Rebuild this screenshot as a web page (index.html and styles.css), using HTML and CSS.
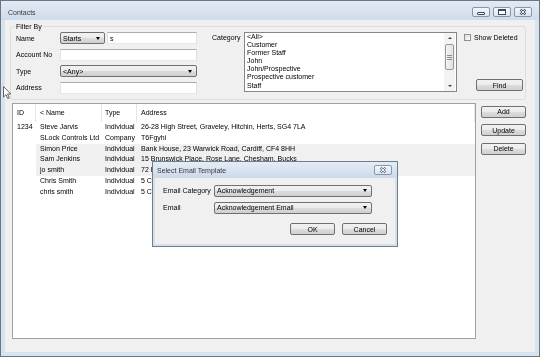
FILE: index.html
```html
<!DOCTYPE html>
<html lang="en">

<head>
  <meta charset="UTF-8" />
  <title>Contacts</title>
  <link rel="stylesheet" href="styles.css">
</head>

<body>
  <div class="window">
    <div class="titlebar">
      <span class="title">Contacts</span>
      <div class="caption-buttons">
        <span class="cap-btn">
          <svg width="16" height="8" viewBox="0 0 16 8"><rect x="4.5" y="4.5" width="7" height="2" rx="0.5" fill="#fff" stroke="#3d4b5e" stroke-width="1"/></svg>
        </span>
        <span class="cap-btn">
          <svg width="16" height="8" viewBox="0 0 16 8"><rect x="4.5" y="1.5" width="7" height="5" fill="#fff" stroke="#3d4b5e" stroke-width="1"/><rect x="5" y="2" width="6" height="1" fill="#3d4b5e"/></svg>
        </span>
        <span class="cap-btn">
          <svg width="16" height="8" viewBox="0 0 16 8"><path d="M5.5 1.5 L10.5 6.5 M10.5 1.5 L5.5 6.5" stroke="#3d4b5e" stroke-width="2.4"/><path d="M5.5 1.5 L10.5 6.5 M10.5 1.5 L5.5 6.5" stroke="#fff" stroke-width="0.9"/></svg>
        </span>
      </div>
    </div>

    <div class="client">
      <fieldset class="filter">
        <legend>Filter By</legend>
        <div class="fields">
          <label>Name</label>
          <div class="name-row">
            <span class="combo starts">Starts<i class="arrow"></i></span>
            <span class="textbox name-box">s</span>
          </div>
          <label>Account No</label>
          <span class="textbox"></span>
          <label>Type</label>
          <span class="combo">&lt;Any&gt;<i class="arrow"></i></span>
          <label>Address</label>
          <span class="textbox"></span>
        </div>

        <label class="cat-label">Category</label>
        <div class="listbox">
          <ul>
            <li>&lt;All&gt;</li>
            <li>Customer</li>
            <li>Former Staff</li>
            <li>John</li>
            <li>John/Prospective</li>
            <li>Prospective customer</li>
            <li>Staff</li>
          </ul>
          <div class="scrollbar">
            <span class="sb-btn"><i class="tri-up"></i></span>
            <span class="thumb"><i></i><i></i><i></i></span>
            <span class="sb-btn sb-down"><i class="tri-down"></i></span>
          </div>
        </div>

        <div class="options">
          <label class="check"><span class="box"></span>Show Deleted</label>
          <span class="button find">Find</span>
        </div>
      </fieldset>

      <div class="results">
        <div class="listview">
          <div class="lv-row lv-header">
            <span>ID</span><span>&lt; Name</span><span>Type</span><span>Address</span>
          </div>
          <div class="lv-row">
            <span>1234</span><span>Steve Jarvis</span><span>Individual</span><span>26-28 High Street, Graveley, Hitchin, Herts, SG4 7LA</span>
          </div>
          <div class="lv-row">
            <span></span><span>SLock Controls Ltd</span><span>Company</span><span>T6Fgyhi</span>
          </div>
          <div class="lv-row shade">
            <span></span><span>Simon Price</span><span>Individual</span><span>Bank House, 23 Warwick Road, Cardiff, CF4 8HH</span>
          </div>
          <div class="lv-row shade">
            <span></span><span>Sam Jenkins</span><span>Individual</span><span>15 Brunswick Place, Rose Lane, Chesham, Bucks</span>
          </div>
          <div class="lv-row shade">
            <span></span><span>jo smith</span><span>Individual</span><span>72 High Street, Amersham, Bucks</span>
          </div>
          <div class="lv-row">
            <span></span><span>Chris Smith</span><span>Individual</span><span>5 Castle Street, Berkhamsted, Herts</span>
          </div>
          <div class="lv-row">
            <span></span><span>chris smith</span><span>Individual</span><span>5 Castle Street, Berkhamsted, Herts</span>
          </div>
        </div>
        <div class="actions">
          <span class="button">Add</span>
          <span class="button">Update</span>
          <span class="button">Delete</span>
        </div>
      </div>
    </div>

    <!-- modal dialog on top of the list -->
    <div class="dialog">
      <div class="dlg-title">
        <span class="title">Select Email Template</span>
        <span class="cap-btn">
          <svg width="16" height="8" viewBox="0 0 16 8"><path d="M5.5 1.5 L10.5 6.5 M10.5 1.5 L5.5 6.5" stroke="#6b7a8e" stroke-width="2.4"/><path d="M5.5 1.5 L10.5 6.5 M10.5 1.5 L5.5 6.5" stroke="#fff" stroke-width="0.9"/></svg>
        </span>
      </div>
      <div class="dlg-client">
        <div class="dlg-fields">
          <label>Email Category</label>
          <span class="combo">Acknowledgement<i class="arrow"></i></span>
          <label>Email</label>
          <span class="combo">Acknowledgement Email<i class="arrow"></i></span>
        </div>
        <div class="dlg-buttons">
          <span class="button">OK</span>
          <span class="button">Cancel</span>
        </div>
      </div>
    </div>

    <svg class="cursor" width="9" height="14" viewBox="0 0 9 14"><path d="M0.5 0.5 L0.5 11 L3 8.6 L4.8 12.6 L6.3 12 L4.6 8 L7.8 8 Z" fill="#fff" stroke="#444" stroke-width="0.8"/></svg>
  </div>
</body>

</html>
```

FILE: styles.css
```css
* { box-sizing: border-box; }
body { margin: 0; font-family: "Liberation Sans", Arial, sans-serif; font-size: 7px; color: #000; }
label { display: block; }

.window { position: relative; width: 540px; height: 357px; border: 1px solid #6b7683; padding: 0 4px 4px; display: flex; flex-direction: column; background: linear-gradient(#e2eaf5, #cfdcec 19px, #d8e3f0 20px, #d8e3f0); }
.titlebar { height: 19px; display: flex; align-items: flex-start; padding: 6px 3px 0; }
.title { flex: 1; line-height: 11px; color: #3a3a3a; }
.caption-buttons { display: flex; gap: 3px; }
.cap-btn { width: 18px; height: 10px; border: 1px solid #8796aa; border-radius: 2px; background: linear-gradient(#f5f8fb, #dbe4ef); display: flex; align-items: center; justify-content: center; }
.cap-btn svg { display: block; }

/* neutral grey areas: keep text anti-aliasing grey like the original */
.client, .dlg-client, .title { filter: grayscale(1); }
.client { flex: 1; background: #f0f0f0; display: flex; flex-direction: column; }

.filter { margin: 2.5px 9px 0 5px; padding: 1.5px 0 5px 5px; border: 1px solid #d5dfe5; border-radius: 3px; display: flex; align-items: flex-start; min-width: 0; }
.filter legend { padding: 0 1px; margin-left: -1px; line-height: 8px; }

.fields { display: grid; grid-template-columns: 44px 137px; grid-auto-rows: 12px; row-gap: 4.67px; align-items: center; }
.name-row { display: flex; gap: 2px; height: 12px; }
.starts { width: 45px; }
.name-box { width: 90px; }

.combo { display: flex; align-items: center; height: 12px; padding-left: 2px; border: 1px solid #707070; border-radius: 2px; background: linear-gradient(#f2f2f2, #ebebeb 50%, #dddddd 51%, #cfcfcf); white-space: nowrap; }
.combo .arrow { margin-left: auto; margin-right: 4px; border-left: 2.5px solid transparent; border-right: 2.5px solid transparent; border-top: 3px solid #000; }
.textbox { display: flex; align-items: center; height: 12px; padding-left: 2px; background: #fff; border: 1px solid; border-color: #abadb3 #dbdfe6 #e3e9ef #e2e3ea; }

.cat-label { margin: 2px 0 0 15px; width: 32px; line-height: 8px; }
.listbox { width: 213px; height: 60px; border: 1px solid #828790; background: #fff; display: flex; padding: 0 1px 0 2px; }
.listbox ul { flex: 1; margin: 0; padding: 0; list-style: none; line-height: 8.1px; }
.scrollbar { width: 11px; display: flex; flex-direction: column; align-items: center; background: #f3f3f3; }
.sb-btn { height: 10px; width: 11px; display: flex; align-items: center; justify-content: center; }
.sb-down { margin-top: auto; }
.tri-up { border-left: 2px solid transparent; border-right: 2px solid transparent; border-bottom: 2px solid #404040; }
.tri-down { border-left: 2px solid transparent; border-right: 2px solid transparent; border-top: 2px solid #404040; }
.thumb { margin-top: 1px; width: 9px; height: 26px; border: 1px solid #979797; border-radius: 2px; background: linear-gradient(90deg, #f4f4f4, #e2e2e2); display: flex; flex-direction: column; align-items: center; justify-content: center; gap: 1px; }
.thumb i { width: 5px; height: 1px; background: #8a8a8a; }

.options { margin-left: 7px; display: flex; flex-direction: column; }
.check { display: flex; align-items: center; gap: 3px; height: 10px; }
.check .box { width: 7px; height: 7px; border: 1px solid #8f8f8f; background: linear-gradient(135deg, #dcdcdc, #fbfbfb); }
.find { margin: 37px 0 0 12px; width: 47px; }

.button { display: flex; align-items: center; justify-content: center; height: 12px; border: 1px solid #707070; border-radius: 2px; background: linear-gradient(#f2f2f2, #ebebeb 50%, #dddddd 51%, #cfcfcf); }

.results { display: flex; margin: 3px 0 0 7px; }
.listview { width: 464px; height: 236px; border: 1px solid #9aa0a8; background: #fff; overflow: hidden; }
.lv-row { display: grid; grid-template-columns: 23px 66px 35px 1fr; height: 10.8px; line-height: 10.8px; white-space: nowrap; }
.lv-row span { padding-left: 4px; overflow: hidden; }
.lv-row span:nth-child(3) { padding-left: 3px; }
.lv-header { height: 18px; line-height: 18px; }
.lv-header span { border-right: 1px solid #e4e6e9; }
.lv-row.shade span:not(:first-child) { background: #f0f0f0; }
.actions { margin: 3px 0 0 5px; width: 45px; display: flex; flex-direction: column; gap: 6.5px; }

.dialog { position: absolute; left: 151px; top: 160px; width: 246px; height: 86px; border: 1px solid #707c8c; background: #d6e0eb; padding: 0 2px 2px; display: flex; flex-direction: column; z-index: 2; }
.dlg-title { height: 16px; margin: 0 -2px; padding: 0 5px 0 4px; display: flex; align-items: center; background: linear-gradient(#e4ecf6, #ccd9ea); }
.dlg-client { flex: 1; background: #f0f0f0; padding: 7px 8px 0; }
.dlg-fields { display: grid; grid-template-columns: 51px 158px; grid-auto-rows: 11px; row-gap: 6px; align-items: center; }
.dlg-buttons { display: flex; justify-content: flex-end; gap: 7px; margin-top: 10px; }
.dlg-buttons .button { width: 45px; }

.cursor { position: absolute; left: 2px; top: 85px; z-index: 3; }
```
